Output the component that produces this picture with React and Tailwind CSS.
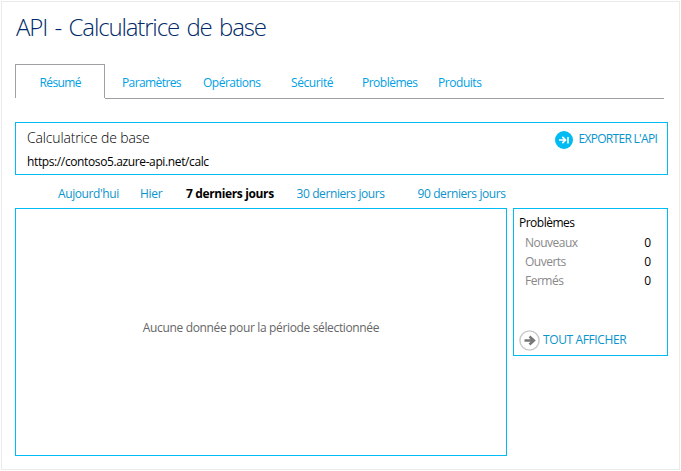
const tabs = [
  { label: "Paramètres", cell: "w-[81px] tracking-[-0.6px]" },
  { label: "Opérations", cell: "w-[88px] tracking-[-0.5px]" },
  { label: "Sécurité", cell: "w-[71px] tracking-[-0.4px]" },
  { label: "Problèmes", cell: "w-[76px] tracking-[-0.5px]" },
  { label: "Produits", cell: "w-[60px] tracking-[-0.45px]" },
];

const periods = [
  { label: "Aujourd'hui", cell: "w-[82px] tracking-[-0.4px] text-[#0a94cc]" },
  { label: "Hier", cell: "w-[46px] tracking-[-0.3px] text-[#0a94cc]" },
  { label: "7 derniers jours", cell: "w-[110.5px] tracking-[-0.37px] font-bold text-black" },
  { label: "30 derniers jours", cell: "w-[121px] tracking-[-0.4px] text-[#0a94cc]" },
  { label: "90 derniers jours", cell: "w-[100px] tracking-[-0.4px] text-[#0a94cc]" },
];

const issues = [
  { label: "Nouveaux", count: 0 },
  { label: "Ouverts", count: 0 },
  { label: "Fermés", count: 0 },
];

function ExportIcon() {
  return (
    <svg width="18" height="18" viewBox="0 0 18 18" className="shrink-0">
      <circle cx="9" cy="9" r="9" fill="#00bcf2" />
      <path d="M4 9h6M7.3 5.8 10.5 9 7.3 12.2" fill="none" stroke="#fff" strokeWidth="1.7" />
      <path d="M13 6v6.5" stroke="#fff" strokeWidth="1.6" />
    </svg>
  );
}

function ArrowIcon() {
  return (
    <svg width="21" height="21" viewBox="0 0 21 21" className="shrink-0">
      <circle cx="10.5" cy="10.5" r="9.6" fill="none" stroke="#c8c8c8" strokeWidth="1.4" />
      <path d="M5.5 10.5h9M10.5 6.5l4.4 4-4.4 4" fill="none" stroke="#777" strokeWidth="2.5" />
    </svg>
  );
}

export default function App() {
  return (
    <div className="h-[471px] w-[681px] bg-white p-px font-['Open_Sans','Noto_Sans',sans-serif] text-xs leading-4 whitespace-nowrap">
      <main className="h-[469px] w-[679px] border border-[#ebebeb] pt-[9px] pl-[13px]">
        <h1 className="h-[53px] pl-px text-[24px] leading-8 font-light tracking-[-1.15px] text-[#002a68] [word-spacing:2.4px]">
          API - Calculatrice de base
        </h1>
        <nav className="flex h-[35px] text-[#00a0e4]">
          <div className="h-[34px] w-[90px] border border-b-0 border-[#a0a0a4] pt-[10px] pl-[23.5px] tracking-[-0.6px]">
            Résumé
          </div>
          <div className="flex w-[559px] border-b border-[#a0a0a4] pt-[11px] pl-[17px]">
            {tabs.map((t) => (
              <div key={t.label} className={t.cell}>{t.label}</div>
            ))}
          </div>
        </nav>
        <section className="mt-[23px] flex h-[53px] w-[653px] justify-between border border-[#00bcf2] pl-[11px]">
          <div>
            <h2 className="pt-[5px] text-sm leading-5 font-light tracking-[-0.15px] text-black">Calculatrice de base</h2>
            <p className="pt-[6px] text-xs leading-4 tracking-[-0.38px] text-black">https://contoso5.azure-api.net/calc</p>
          </div>
          <div className="flex w-[112px] gap-[5.5px] pt-2 text-[#0a94cc]">
            <ExportIcon />
            <span className="tracking-[-0.7px]">EXPORTER L'API</span>
          </div>
        </section>
        <div className="flex h-[33px] pt-[11px] pl-[43px]">
          {periods.map((p) => (
            <div key={p.label} className={p.cell}>{p.label}</div>
          ))}
        </div>
        <div className="flex items-start gap-[6px]">
          <section className="h-[248px] w-[492px] border border-[#00bcf2] pt-[111px] text-center tracking-[-0.35px] text-[#666]">
            Aucune donnée pour la période sélectionnée
          </section>
          <aside className="h-[148px] w-[155px] border border-[#00bcf2] pt-[6px] pl-[5px]">
            <h3 className="tracking-[-0.5px] text-black">Problèmes</h3>
            <div className="pt-[2px] pr-[16px] pl-[6px]">
              {issues.map((i) => (
                <div key={i.label} className="flex h-[19px] items-center justify-between">
                  <span className="tracking-[-0.5px] text-[#888]">{i.label}</span>
                  <span className="text-black">{i.count}</span>
                </div>
              ))}
            </div>
            <div className="flex items-start gap-[3px] pt-[40px] text-[#0a94cc]">
              <ArrowIcon />
              <span className="pt-[2px] tracking-[-0.38px]">TOUT AFFICHER</span>
            </div>
          </aside>
        </div>
      </main>
    </div>
  );
}
